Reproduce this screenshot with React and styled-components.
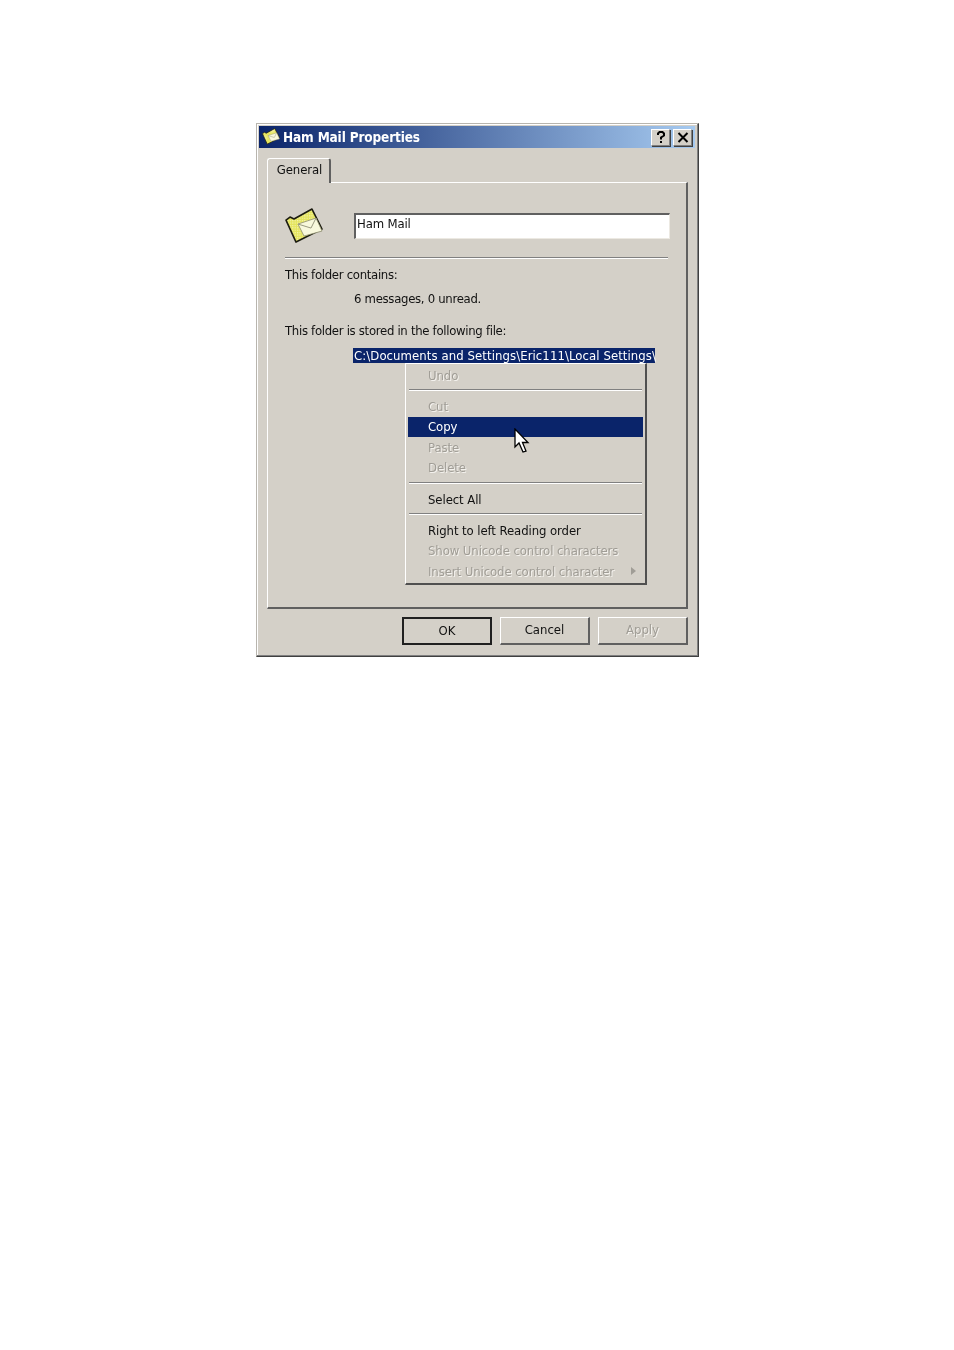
import React from 'react';
import styled, { createGlobalStyle } from 'styled-components';

const GlobalStyle = createGlobalStyle`
    html, body {
        margin: 0;
        padding: 0;
        background: #ffffff;
    }
    body {
        font-family: "DejaVu Sans Condensed", "DejaVu Sans", sans-serif;
        font-stretch: condensed;
        font-size: 13px;
        color: #000000;
    }
`;

const Page = styled.div`
    width: 954px;
    height: 1350px;
    padding: 123px 0 0 256px;
    box-sizing: border-box;
`;

const Window = styled.div`
    position: relative;
    width: 443px;
    height: 534px;
    box-sizing: border-box;
    background: #d4d0c8;
    padding: 2px 3px 0 2px;
    border: 1px solid #b8b5ae;
    border-right-color: #404040;
    border-bottom-color: #404040;
    box-shadow: inset -1px -1px 0 #808080, inset 1px 1px 0 #ffffff;
    filter: blur(0.45px);
`;

const TitleBar = styled.div`
    height: 22px;
    display: flex;
    align-items: center;
    padding: 0 3px 0 3px;
    background: linear-gradient(90deg, #0a246a 0%, #a6caf0 100%);
`;

const TitleText = styled.span`
    flex: 1;
    margin-left: 3px;
    color: #ffffff;
    font-weight: 700;
    font-size: 13.5px;
    letter-spacing: -0.15px;
`;

const CaptionButton = styled.button`
    width: 19px;
    height: 17px;
    padding: 0;
    margin-left: ${(p) => (p.$gap ? '3px' : '0')};
    display: flex;
    align-items: center;
    justify-content: center;
    background: #d4d0c8;
    border: 1px solid #808080;
    border-top-color: #ffffff;
    border-left-color: #ffffff;
    box-shadow: 1px 1px 0 #404040;
`;

const Body = styled.div`
    padding: 10px 7px 0 8px;
`;

const TabStrip = styled.div`
    display: flex;
    height: 25px;
`;

const Tab = styled.div`
    width: 64px;
    height: 25px;
    box-sizing: border-box;
    text-align: center;
    line-height: 21px;
    padding-left: 2px;
    letter-spacing: -0.1px;
    border-top: 1px solid #ffffff;
    border-left: 1px solid #ffffff;
    border-right: 2px solid #606060;
    border-radius: 3px 3px 0 0;
    position: relative;
    z-index: 1;
    background: #d4d0c8;
    color: #111111;
`;

const Panel = styled.div`
    position: relative;
    width: 421px;
    height: 427px;
    margin-top: -1px;
    box-sizing: border-box;
    padding: 25px 18px 0 17px;
    border: 1px solid #ffffff;
    border-right: 2px solid #606060;
    border-bottom: 2px solid #606060;
`;

const NameRow = styled.div`
    display: flex;
    align-items: center;
    height: 36px;
`;

const IconSlot = styled.div`
    flex: none;
    width: 69px;
    height: 36px;
`;

const NameInput = styled.div`
    flex: none;
    width: 316px;
    height: 26px;
    box-sizing: border-box;
    background: #ffffff;
    padding-left: 1px;
    line-height: 18px;
    letter-spacing: -0.15px;
    border: 2px solid #606060;
    border-right: 1px solid #ece9e2;
    border-bottom: 1px solid #ece9e2;
    color: #111111;
`;

const Rule = styled.div`
    height: 2px;
    margin-top: 13px;
    background: linear-gradient(#808080 50%, #ffffff 50%);
`;

const Label = styled.div`
    height: 24px;
    line-height: 24px;
    margin-top: ${(p) => p.$top || 0}px;
    padding-left: ${(p) => (p.$indent ? '69px' : '0')};
    letter-spacing: -0.3px;
    color: #111111;
    white-space: nowrap;
`;

const SelectedPath = styled.div`
    width: 302px;
    height: 15px;
    margin: 5px 0 0 68px;
    line-height: 15px;
    letter-spacing: 0.08px;
    white-space: nowrap;
    padding-left: 1px;
    box-sizing: border-box;
    background: #0a246a;
    color: #ffffff;
`;

const Menu = styled.div`
    position: absolute;
    left: 137px;
    top: 180px;
    width: 242px;
    height: 222px;
    box-sizing: border-box;
    padding: 1px 2px;
    background: #d4d0c8;
    border-left: 1px solid #ffffff;
    border-top: 1px solid #ffffff;
    border-right: 2px solid #505050;
    border-bottom: 2px solid #505050;
    z-index: 2;
`;

const MenuItem = styled.div`
    display: flex;
    align-items: center;
    justify-content: space-between;
    height: 20.4px;
    padding: 0 7px 0 20px;
    letter-spacing: -0.08px;
    white-space: nowrap;
    background: ${(p) => (p.$active ? '#0a246a' : 'transparent')};
    color: ${(p) => (p.$active ? '#ffffff' : p.$disabled ? '#a09d96' : '#111111')};
    text-shadow: ${(p) => (p.$disabled ? '1px 1px 0 #f4f2ee' : 'none')};
`;

const MenuRule = styled.div`
    height: 2px;
    margin: 4px 1px 5px 1px;
    background: linear-gradient(#808080 50%, #ffffff 50%);
`;

const Footer = styled.div`
    display: flex;
    justify-content: flex-end;
    gap: 8px;
    margin-top: 8px;
    width: 421px;
`;

const DialogButton = styled.button`
    width: 90px;
    height: 28px;
    padding: 0 0 2px 0;
    box-sizing: border-box;
    font: inherit;
    font-stretch: condensed;
    background: #d4d0c8;
    color: ${(p) => (p.disabled ? '#a09d96' : '#111111')};
    text-shadow: ${(p) => (p.disabled ? '1px 1px 0 #f4f2ee' : 'none')};
    border: ${(p) => (p.$primary ? '2px solid #202020' : '1px solid #ffffff')};
    border-right: 2px solid ${(p) => (p.$primary ? '#202020' : '#606060')};
    border-bottom: 2px solid ${(p) => (p.$primary ? '#202020' : '#606060')};
`;

const Pointer = styled.svg`
    position: absolute;
    left: 514px;
    top: 428px;
    z-index: 3;
`;

const Chevron = styled.span`
    width: 0;
    height: 0;
    border-left: 5px solid #a09d96;
    border-top: 4px solid transparent;
    border-bottom: 4px solid transparent;
`;

const FolderMail = ({ size, id }) => (
    <svg width={size} height={size * 0.95} viewBox="0 0 38 36">
        <defs>
            <pattern id={id} width="2.4" height="2.4" patternUnits="userSpaceOnUse">
                <rect width="2.4" height="2.4" fill="#e4e45c" />
                <rect width="1.2" height="1.2" fill="#f4f4b0" />
            </pattern>
        </defs>
        <path d="M1 12 L5 9 L9 11 L27 1 L37 21 L11 34 Z" fill={`url(#${id})`} stroke="#1c1c10" strokeWidth="1.6" strokeLinejoin="round" />
        <path d="M13 16 L31 10 L37 23 L19 28 Z" fill="#f8f8dc" stroke="#8d8d70" strokeWidth="0.8" />
        <path d="M13 16 L26 20 L31 10" fill="none" stroke="#9a9a80" strokeWidth="1" />
    </svg>
);

const App = () => {
    return (
        <Page>
            <GlobalStyle />
            <Window>
                <TitleBar>
                    <FolderMail size={18} id="dither-small" />
                    <TitleText>Ham Mail Properties</TitleText>
                    <CaptionButton>
                        <svg width="10" height="13" viewBox="0 0 10 13">
                            <path d="M2 4 V2.5 L3.5 1 H6.5 L8 2.5 V4.5 L5 6.5 V8.5 M5 10 V12" fill="none" stroke="#000" strokeWidth="2" />
                        </svg>
                    </CaptionButton>
                    <CaptionButton $gap>
                        <svg width="12" height="11" viewBox="0 0 12 11">
                            <path d="M1.5 1 L10.5 10 M10.5 1 L1.5 10" fill="none" stroke="#000" strokeWidth="2" />
                        </svg>
                    </CaptionButton>
                </TitleBar>
                <Body>
                    <TabStrip>
                        <Tab>General</Tab>
                    </TabStrip>
                    <Panel>
                        <NameRow>
                            <IconSlot>
                                <FolderMail size={38} id="dither-large" />
                            </IconSlot>
                            <NameInput>Ham Mail</NameInput>
                        </NameRow>
                        <Rule />
                        <Label $top={4}>This folder contains:</Label>
                        <Label $indent>6 messages, 0 unread.</Label>
                        <Label $top={8}>This folder is stored in the following file:</Label>
                        <SelectedPath>C:\Documents and Settings\Eric111\Local Settings\</SelectedPath>
                        <Menu>
                            <MenuItem $disabled>Undo</MenuItem>
                            <MenuRule />
                            <MenuItem $disabled>Cut</MenuItem>
                            <MenuItem $active>Copy</MenuItem>
                            <MenuItem $disabled>Paste</MenuItem>
                            <MenuItem $disabled>Delete</MenuItem>
                            <MenuRule />
                            <MenuItem>Select All</MenuItem>
                            <MenuRule />
                            <MenuItem>Right to left Reading order</MenuItem>
                            <MenuItem $disabled>Show Unicode control characters</MenuItem>
                            <MenuItem $disabled>
                                Insert Unicode control character
                                <Chevron />
                            </MenuItem>
                        </Menu>
                    </Panel>
                    <Footer>
                        <DialogButton $primary>OK</DialogButton>
                        <DialogButton>Cancel</DialogButton>
                        <DialogButton disabled>Apply</DialogButton>
                    </Footer>
                </Body>
            </Window>
            <Pointer width="16" height="26" viewBox="0 0 16 26">
                <path d="M1 1 V19 L5 15 L9 24 L12 23 L8.5 14.5 L14 14.5 Z" fill="#ffffff" stroke="#000000" strokeWidth="1.3" />
            </Pointer>
        </Page>
    );
};

export default App;
